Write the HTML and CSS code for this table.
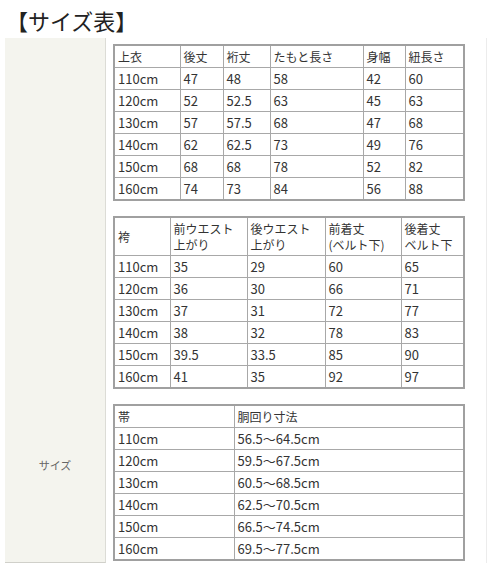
FILE: index.html
```html
<!DOCTYPE html>
<html lang="ja">
<head>
<meta charset="utf-8">
<title>サイズ表</title>
<link rel="stylesheet" href="styles.css">
</head>
<body>
<h2 class="title">【サイズ表】</h2>
<div class="spec">
  <div class="label"><span>サイズ</span></div>
  <div class="content">
    <table class="size t1">
      <colgroup><col style="width:66px"><col style="width:43px"><col style="width:47px"><col style="width:93px"><col style="width:42px"><col style="width:59px"></colgroup>
      <tr><td>上衣</td><td>後丈</td><td>裄丈</td><td>たもと長さ</td><td>身幅</td><td>紐長さ</td></tr>
      <tr><td>110cm</td><td>47</td><td>48</td><td>58</td><td>42</td><td>60</td></tr>
      <tr><td>120cm</td><td>52</td><td>52.5</td><td>63</td><td>45</td><td>63</td></tr>
      <tr><td>130cm</td><td>57</td><td>57.5</td><td>68</td><td>47</td><td>68</td></tr>
      <tr><td>140cm</td><td>62</td><td>62.5</td><td>73</td><td>49</td><td>76</td></tr>
      <tr><td>150cm</td><td>68</td><td>68</td><td>78</td><td>52</td><td>82</td></tr>
      <tr><td>160cm</td><td>74</td><td>73</td><td>84</td><td>56</td><td>88</td></tr>
    </table>
    <table class="size t2">
      <colgroup><col style="width:56px"><col style="width:77px"><col style="width:78px"><col style="width:76px"><col style="width:63px"></colgroup>
      <tr class="head2"><td>袴</td><td>前ウエスト<br>上がり</td><td>後ウエスト<br>上がり</td><td>前着丈<br>(ベルト下)</td><td>後着丈<br>ベルト下</td></tr>
      <tr><td>110cm</td><td>35</td><td>29</td><td>60</td><td>65</td></tr>
      <tr><td>120cm</td><td>36</td><td>30</td><td>66</td><td>71</td></tr>
      <tr><td>130cm</td><td>37</td><td>31</td><td>72</td><td>77</td></tr>
      <tr><td>140cm</td><td>38</td><td>32</td><td>78</td><td>83</td></tr>
      <tr><td>150cm</td><td>39.5</td><td>33.5</td><td>85</td><td>90</td></tr>
      <tr><td>160cm</td><td>41</td><td>35</td><td>92</td><td>97</td></tr>
    </table>
    <table class="size t3">
      <colgroup><col style="width:120px"><col style="width:230px"></colgroup>
      <tr><td>帯</td><td>胴回り寸法</td></tr>
      <tr><td>110cm</td><td>56.5～64.5cm</td></tr>
      <tr><td>120cm</td><td>59.5～67.5cm</td></tr>
      <tr><td>130cm</td><td>60.5～68.5cm</td></tr>
      <tr><td>140cm</td><td>62.5～70.5cm</td></tr>
      <tr><td>150cm</td><td>66.5～74.5cm</td></tr>
      <tr><td>160cm</td><td>69.5～77.5cm</td></tr>
    </table>
  </div>
</div>
</body>
</html>
```

FILE: styles.css
```css
html, body {
  margin: 0;
  padding: 0;
  background: #fff;
  font-family: "Noto Sans CJK JP", "Noto Sans", sans-serif;
  color: #333;
}

.title {
  margin: 0;
  padding: 6px 0 0 6px;
  height: 38px;
  box-sizing: border-box;
  font-size: 22px;
  line-height: 28px;
  font-weight: normal;
  color: #222;
}

.spec {
  display: flex;
  margin-left: 5px;
  width: 481px;
  border-right: 1px solid #ececec;
}

.label {
  width: 101px;
  flex: none;
  background: #f4f4ee;
  border-right: 1px solid #dcdcd6;
  border-bottom: 1px solid #d0d0ca;
  box-sizing: border-box;
  height: 525px;
  padding-top: 419px;
  text-align: center;
  font-size: 11px;
  color: #666;
}

.content {
  flex: 1;
  padding: 6px 0 0 7px;
  display: flex;
  flex-direction: column;
  gap: 15px;
}

.size {
  width: 350px;
  table-layout: fixed;
  border-collapse: collapse;
  border: 2px solid #a0a0a0;
  font-size: 13px;
  color: #333;
}

.size td {
  border: 1px solid #a8a8a8;
  padding: 0 3px;
  height: 21px;
  line-height: 16px;
  vertical-align: middle;
  white-space: nowrap;
  overflow: hidden;
}

.t1 tr:first-child td,
.t2 tr:first-child td,
.t3 tr:first-child td {
  font-size: 12px;
}

.t2 .head2 td {
  height: 37px;
  line-height: 16px;
  font-size: 11px;
}
```
